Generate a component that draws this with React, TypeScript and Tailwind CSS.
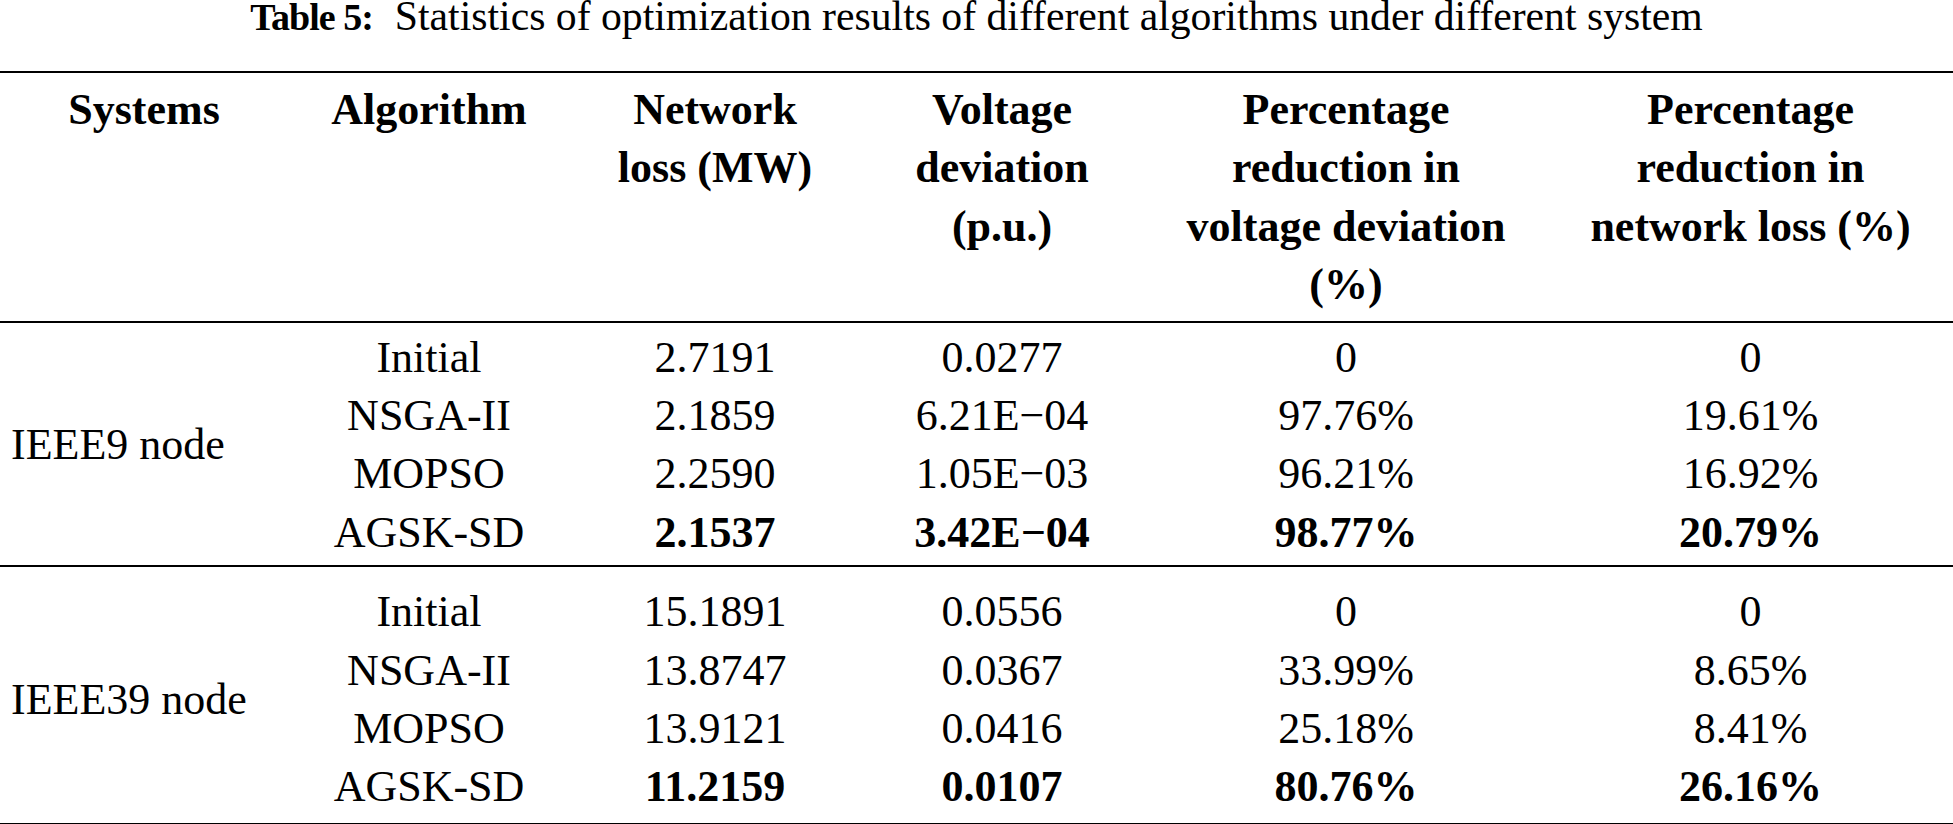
import React from 'react';

type Row = {
  algorithm: string;
  loss: string;
  deviation: string;
  devReduction: string;
  lossReduction: string;
  best?: boolean;
};

type Group = {
  system: string;
  rows: Row[];
  padTop: string;
  padBottom: string;
};

const groups: Group[] = [
  {
    system: 'IEEE9 node',
    padTop: 'pt-[6px]',
    padBottom: 'pb-[3px]',
    rows: [
      { algorithm: 'Initial', loss: '2.7191', deviation: '0.0277', devReduction: '0', lossReduction: '0' },
      { algorithm: 'NSGA-II', loss: '2.1859', deviation: '6.21E−04', devReduction: '97.76%', lossReduction: '19.61%' },
      { algorithm: 'MOPSO', loss: '2.2590', deviation: '1.05E−03', devReduction: '96.21%', lossReduction: '16.92%' },
      { algorithm: 'AGSK-SD', loss: '2.1537', deviation: '3.42E−04', devReduction: '98.77%', lossReduction: '20.79%', best: true },
    ],
  },
  {
    system: 'IEEE39 node',
    padTop: 'pt-[16px]',
    padBottom: 'pb-[6px]',
    rows: [
      { algorithm: 'Initial', loss: '15.1891', deviation: '0.0556', devReduction: '0', lossReduction: '0' },
      { algorithm: 'NSGA-II', loss: '13.8747', deviation: '0.0367', devReduction: '33.99%', lossReduction: '8.65%' },
      { algorithm: 'MOPSO', loss: '13.9121', deviation: '0.0416', devReduction: '25.18%', lossReduction: '8.41%' },
      { algorithm: 'AGSK-SD', loss: '11.2159', deviation: '0.0107', devReduction: '80.76%', lossReduction: '26.16%', best: true },
    ],
  },
];

const cols = 'grid grid-cols-[282px_290px_284px_404px_405px]';

export default function App() {
  return (
    <div className="w-[1953px] h-[824px] bg-white text-black font-['Liberation_Serif','Times_New_Roman',serif] overflow-hidden">
      {/* Caption */}
      <div className="h-[34px] text-center text-[41.7px] leading-[33px] whitespace-nowrap">
        <span className="font-bold text-[38px] tracking-[-1px]">Table 5:</span>
        <span className="ml-[22px]">Statistics of optimization results of different algorithms under different system</span>
      </div>

      <div className="mt-[37px] border-t-2 border-black text-[44px] leading-[58.4px]">
        {/* Header */}
        <div className="flex pt-[8px] pb-[6px] border-b-2 border-black font-bold text-center whitespace-nowrap">
          <div className="w-[288px]">Systems</div>
          <div className={cols}>
            <div>Algorithm</div>
            <div>
              Network
              <br />
              loss (MW)
            </div>
            <div>
              Voltage
              <br />
              deviation
              <br />
              (p.u.)
            </div>
            <div>
              Percentage
              <br />
              reduction in
              <br />
              voltage deviation
              <br />
              (%)
            </div>
            <div>
              Percentage
              <br />
              reduction in
              <br />
              network loss (%)
            </div>
          </div>
        </div>

        {/* Body */}
        {groups.map(group => (
          <div key={group.system} className={`flex border-b-2 border-black ${group.padTop} ${group.padBottom}`}>
            <div className="w-[288px] flex items-center pl-[11px] whitespace-nowrap">{group.system}</div>
            <div className={`${cols} text-center whitespace-nowrap`}>
              {group.rows.map(row => (
                <React.Fragment key={row.algorithm}>
                  <div>{row.algorithm}</div>
                  <div className={row.best ? 'font-bold' : ''}>{row.loss}</div>
                  <div className={row.best ? 'font-bold' : ''}>{row.deviation}</div>
                  <div className={row.best ? 'font-bold' : ''}>{row.devReduction}</div>
                  <div className={row.best ? 'font-bold' : ''}>{row.lossReduction}</div>
                </React.Fragment>
              ))}
            </div>
          </div>
        ))}
      </div>
    </div>
  );
}
